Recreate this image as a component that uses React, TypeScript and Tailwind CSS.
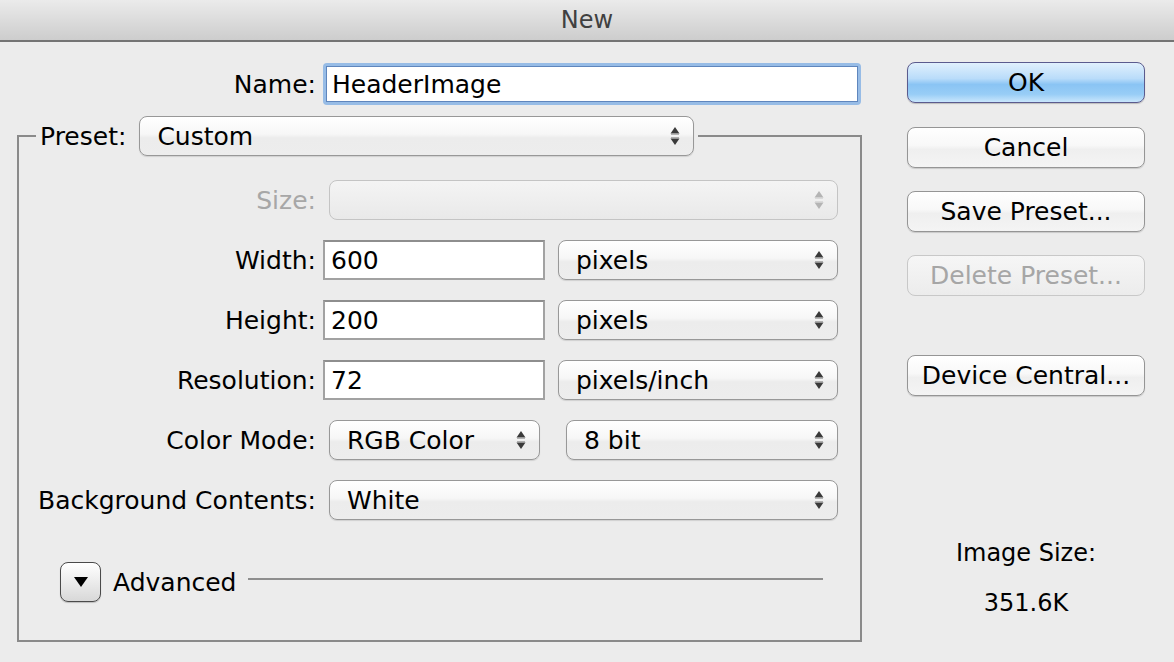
import React from "react";

function Arrows({ disabled }: { disabled?: boolean }) {
  const c = disabled ? "#b4b4b4" : "#3a3a3a";
  return (
    <svg width="12" height="24" viewBox="0 0 12 24" className="shrink-0">
      <polygon points="6,3 10.5,9.5 1.5,9.5" fill={c} />
      <rect x="2" y="10" width="8" height="1" fill={c} opacity="0.35" />
      <rect x="2" y="13" width="8" height="1" fill={c} opacity="0.35" />
      <polygon points="1.5,14.5 10.5,14.5 6,21" fill={c} />
    </svg>
  );
}

function Popup({
  text,
  className,
  disabled,
}: {
  text?: string;
  className: string;
  disabled?: boolean;
}) {
  return (
    <div
      className={
        "h-[40px] rounded-[8px] border-[1.5px] flex items-center pl-[17px] pr-[12px] " +
        (disabled
          ? "border-[#c4c4c4] bg-gradient-to-b from-[#f4f4f4] to-[#e9e9e9] text-[#a8a8a8] "
          : "border-[#989898] bg-[linear-gradient(to_bottom,#ffffff_0%,#f7f7f7_45%,#ececec_55%,#ededed_100%)] shadow-[0_1px_1px_rgba(0,0,0,0.12)] text-black ") +
        className
      }
    >
      <span className="flex-1 leading-none">{text}</span>
      <Arrows disabled={disabled} />
    </div>
  );
}

function Field({ value, className }: { value: string; className: string }) {
  return (
    <div
      className={
        "h-[40px] bg-white border-2 border-[#a2a2a2] border-t-[#8e8e8e] flex items-center pl-[6px] " +
        className
      }
    >
      <span className="leading-none">{value}</span>
    </div>
  );
}

function Button({
  children,
  className,
  primary,
  disabled,
}: {
  children: React.ReactNode;
  className?: string;
  primary?: boolean;
  disabled?: boolean;
}) {
  return (
    <div
      className={
        "w-[238px] h-[41px] rounded-[8px] flex items-center justify-center leading-none " +
        (primary
          ? "border-[1.5px] border-[#5b5b8e] bg-[linear-gradient(to_bottom,#e0f0fd_0%,#b9dcfa_40%,#8ac4f4_55%,#98cdf6_80%,#c9e6fc_100%)] text-black shadow-[0_1px_1px_rgba(0,0,0,0.2)] "
          : disabled
          ? "border-[1.5px] border-[#c8c8c8] bg-gradient-to-b from-[#f6f6f6] to-[#ececec] text-[#a6a6a6] "
          : "border-[1.5px] border-[#959595] bg-[linear-gradient(to_bottom,#ffffff_0%,#f8f8f8_45%,#efefef_55%,#f4f4f4_100%)] text-black shadow-[0_1px_1px_rgba(0,0,0,0.15)] ") +
        (className || "")
      }
    >
      {children}
    </div>
  );
}

function Label({
  children,
  disabled,
}: {
  children: React.ReactNode;
  disabled?: boolean;
}) {
  return (
    <div
      className={
        "w-[304px] shrink-0 text-right pr-[7px] leading-none " +
        (disabled ? "text-[#a7a7a7]" : "text-black")
      }
    >
      {children}
    </div>
  );
}

export default function App() {
  return (
    <div className="w-[1174px] h-[662px] overflow-hidden bg-[#ececec] flex flex-col font-['DejaVu_Sans',sans-serif] text-[25px] text-black">
      <div className="h-[42px] shrink-0 border-b-2 border-[#747474] bg-gradient-to-b from-[#ebebeb] to-[#cdcdcd] flex items-center justify-center text-[24px] text-[#404040]">
        New
      </div>
      <div className="flex flex-1">
        <div className="w-[862px] pl-[17px] pt-[21px] flex flex-col">
          <div className="flex items-center h-[42px]">
            <div className="w-[306px] shrink-0 text-right pr-[7px] leading-none">
              Name:
            </div>
            <div className="w-[538px] h-[42px] rounded-[4px] bg-[#97bce6] p-[3px]">
              <div className="h-full bg-white border border-[#5f86bd] flex items-center pl-[5px]">
                <span className="leading-none">HeaderImage</span>
              </div>
            </div>
          </div>
          <fieldset className="mt-[11px] w-[845px] border-2 border-[#8a8a8a] pt-[24px] pb-[38px]">
            <legend className="ml-[17px] px-[4px] flex items-center">
              <span className="leading-none mr-[13px]">Preset:</span>
              <Popup text="Custom" className="w-[555px]" />
            </legend>
            <div className="flex flex-col gap-[20px]">
              <div className="flex items-center">
                <Label disabled>Size:</Label>
                <Popup disabled className="w-[509px] ml-[6px]" />
              </div>
              <div className="flex items-center">
                <Label>Width:</Label>
                <Field value="600" className="w-[222px]" />
                <Popup text="pixels" className="w-[280px] ml-[13px]" />
              </div>
              <div className="flex items-center">
                <Label>Height:</Label>
                <Field value="200" className="w-[222px]" />
                <Popup text="pixels" className="w-[280px] ml-[13px]" />
              </div>
              <div className="flex items-center">
                <Label>Resolution:</Label>
                <Field value="72" className="w-[222px]" />
                <Popup text="pixels/inch" className="w-[280px] ml-[13px]" />
              </div>
              <div className="flex items-center">
                <Label>Color Mode:</Label>
                <Popup text="RGB Color" className="w-[211px] ml-[6px]" />
                <Popup text="8 bit" className="w-[272px] ml-[26px]" />
              </div>
              <div className="flex items-center">
                <Label>Background Contents:</Label>
                <Popup text="White" className="w-[509px] ml-[6px]" />
              </div>
            </div>
            <div className="flex items-center mt-[42px] pl-[41px] pr-[37px]">
              <div className="w-[41px] h-[40px] rounded-[8px] border-[1.5px] border-[#4a4a4a] bg-gradient-to-b from-[#ffffff] via-[#ececec] to-[#d8d8d8] flex items-center justify-center shadow-[0_1px_1px_rgba(0,0,0,0.2)]">
                <svg width="16" height="12" viewBox="0 0 16 12">
                  <polygon points="1,1 15,1 8,11" fill="#000" />
                </svg>
              </div>
              <span className="ml-[12px] leading-none">Advanced</span>
              <div className="flex-1 ml-[11px] h-[2px] bg-[#8e8e8e] -mt-[6px]" />
            </div>
          </fieldset>
        </div>
        <div className="ml-[45px] pt-[20px] flex flex-col">
          <Button primary>OK</Button>
          <Button className="mt-[24px]">Cancel</Button>
          <Button className="mt-[23px]">Save Preset...</Button>
          <Button disabled className="mt-[23px]">
            Delete Preset...
          </Button>
          <Button className="mt-[59px]">Device Central...</Button>
          <div className="mt-[145px] flex flex-col items-center leading-none text-[24px]">
            <span>Image Size:</span>
            <span className="mt-[26px]">351.6K</span>
          </div>
        </div>
      </div>
    </div>
  );
}
